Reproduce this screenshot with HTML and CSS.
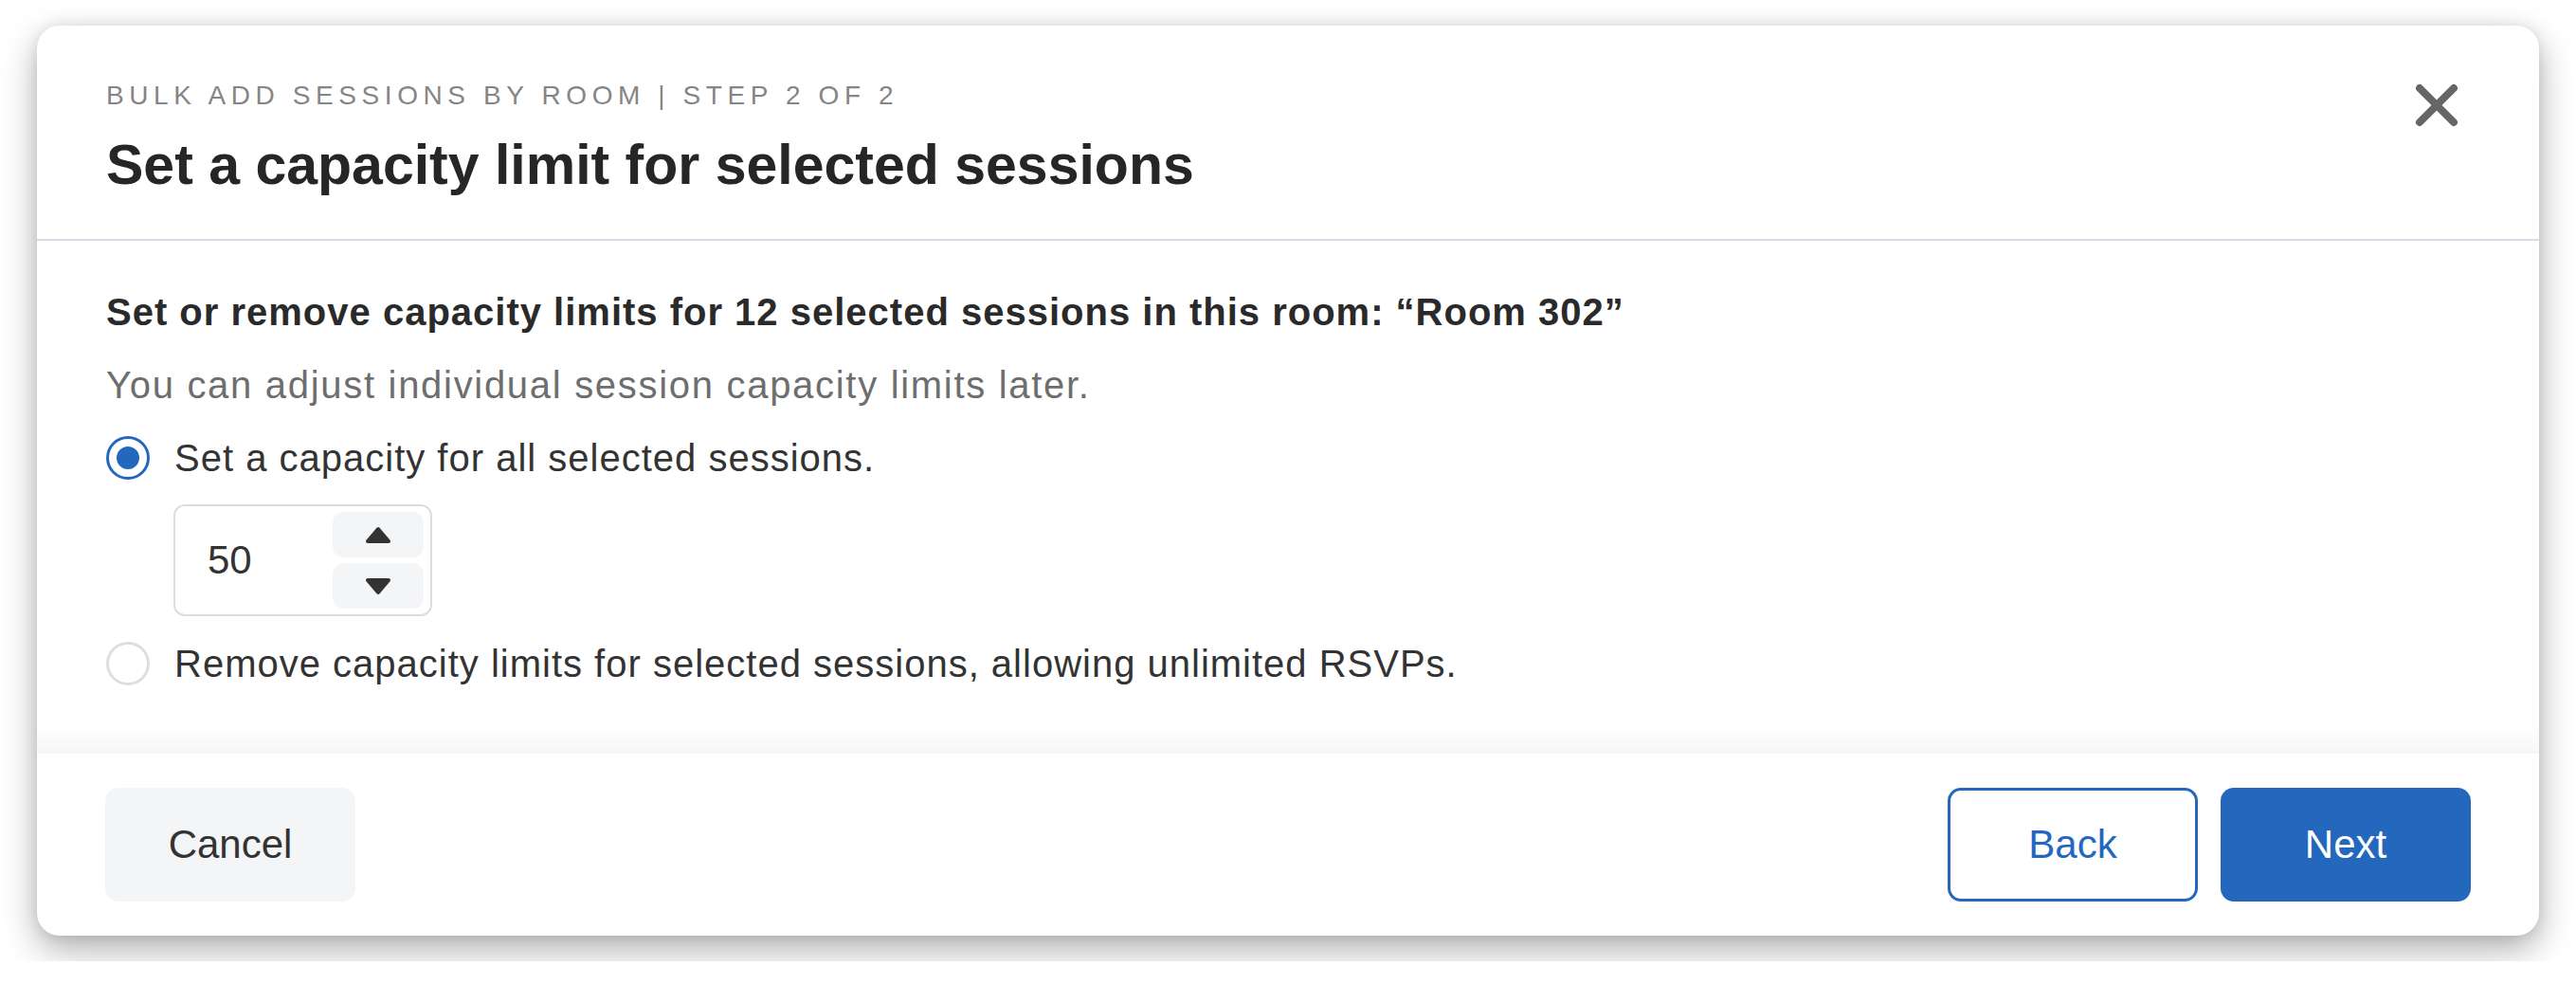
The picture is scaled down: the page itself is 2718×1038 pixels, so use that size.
FILE: index.html
```html
<!DOCTYPE html>
<html lang="en">
  <head>
    <meta charset="UTF-8" />
    <meta name="viewport" content="width=device-width, initial-scale=1.0" />
    <title>Bulk add sessions</title>
    <link rel="stylesheet" href="styles.css">
  </head>
  <body>
    <div class="modal">
      <div class="modal-header">
        <div class="titles">
          <p class="step">Bulk add sessions by room | Step 2 of 2</p>
          <h1 class="title">Set a capacity limit for selected sessions</h1>
        </div>
        <button class="close" aria-label="Close">
          <svg width="46" height="46" viewBox="0 0 46 46">
            <path d="M5 5 L41 41 M41 5 L5 41" stroke="#666" stroke-width="8" stroke-linecap="round" fill="none" />
          </svg>
        </button>
      </div>

      <div class="modal-body">
        <h2 class="lead">Set or remove capacity limits for 12 selected sessions in this room: &ldquo;Room 302&rdquo;</h2>
        <p class="hint">You can adjust individual session capacity limits later.</p>

        <label class="option">
          <span class="radio checked"></span>
          Set a capacity for all selected sessions.
        </label>

        <div class="stepper">
          <span class="value">50</span>
          <div class="spin">
            <button class="spin-btn" aria-label="Increase">
              <svg width="30" height="19" viewBox="0 0 30 19">
                <path d="M4 16 L15 3 L26 16 Z" fill="#333" stroke="#333" stroke-width="4" stroke-linejoin="round" />
              </svg>
            </button>
            <button class="spin-btn" aria-label="Decrease">
              <svg width="30" height="19" viewBox="0 0 30 19">
                <path d="M4 3 L15 16 L26 3 Z" fill="#333" stroke="#333" stroke-width="4" stroke-linejoin="round" />
              </svg>
            </button>
          </div>
        </div>

        <label class="option">
          <span class="radio"></span>
          Remove capacity limits for selected sessions, allowing unlimited RSVPs.
        </label>
      </div>

      <div class="modal-footer">
        <button class="btn btn-cancel">Cancel</button>
        <div class="actions">
          <button class="btn btn-back">Back</button>
          <button class="btn btn-next">Next</button>
        </div>
      </div>
    </div>
  </body>
</html>
```

FILE: styles.css
```css
* {
  margin: 0;
  padding: 0;
  box-sizing: border-box;
}
body {
  background: #fff;
  padding: 27px 39px;
  font-family: "Liberation Sans", Arial, sans-serif;
  color: #333;
}
button {
  font-family: inherit;
  border: none;
  background: none;
  cursor: pointer;
}
.modal {
  width: 2640px;
  height: 960px;
  background: #fff;
  border-radius: 24px;
  box-shadow: 0 14px 36px rgba(0, 0, 0, 0.32), 0 0 14px rgba(0, 0, 0, 0.08);
  display: flex;
  flex-direction: column;
  overflow: hidden;
}

/* header */
.modal-header {
  display: flex;
  justify-content: space-between;
  align-items: flex-start;
  padding: 57px 85px 43px 73px;
  border-bottom: 2px solid #d5dde7;
}
.step {
  font-size: 28px;
  line-height: 34px;
  letter-spacing: 5.6px;
  text-transform: uppercase;
  color: #858585;
}
.title {
  margin-top: 21px;
  font-size: 59px;
  line-height: 70px;
  font-weight: bold;
  color: #262626;
}
.close {
  margin-top: 4px;
  width: 46px;
  height: 46px;
  display: flex;
}

/* body */
.modal-body {
  flex: 1;
  padding: 51px 73px 0;
  background: linear-gradient(to bottom, #fff calc(100% - 32px), #f6f6f6);
}
.lead {
  font-size: 40px;
  line-height: 48px;
  font-weight: bold;
  letter-spacing: 1px;
  color: #2a2a2a;
}
.hint {
  margin-top: 29px;
  font-size: 40px;
  line-height: 48px;
  letter-spacing: 1.7px;
  color: #6e6e6e;
}
.option {
  margin-top: 29px;
  display: flex;
  align-items: center;
  gap: 26px;
  font-size: 40px;
  line-height: 48px;
  letter-spacing: 1px;
  color: #333;
}
.stepper + .option {
  margin-top: 26px;
}
.radio {
  width: 46px;
  height: 46px;
  border-radius: 50%;
  border: 3px solid #dedede;
  display: flex;
  align-items: center;
  justify-content: center;
  flex-shrink: 0;
}
.radio.checked {
  border-color: #2468be;
}
.radio.checked::after {
  content: "";
  width: 24px;
  height: 24px;
  border-radius: 50%;
  background: #2468be;
}

/* number input */
.stepper {
  margin: 25px 0 0 71px;
  width: 273px;
  height: 118px;
  border: 2px solid #dddddd;
  border-radius: 12px;
  display: flex;
  align-items: center;
}
.stepper .value {
  padding-left: 34px;
  font-size: 42px;
  color: #333;
}
.spin {
  margin-left: auto;
  padding: 6px 7px;
  display: flex;
  flex-direction: column;
  gap: 6px;
}
.spin-btn {
  width: 96px;
  height: 48px;
  border-radius: 12px;
  background: #f4f5f7;
  display: flex;
  align-items: center;
  justify-content: center;
}

/* footer */
.modal-footer {
  display: flex;
  justify-content: space-between;
  padding: 36px 72px;
}
.actions {
  display: flex;
  gap: 24px;
}
.btn {
  width: 264px;
  height: 120px;
  border-radius: 14px;
  font-size: 42px;
  display: flex;
  align-items: center;
  justify-content: center;
}
.btn-cancel {
  background: #f4f5f7;
  color: #333;
}
.btn-back {
  border: 3px solid #2468be;
  color: #2468be;
  background: #fff;
}
.btn-next {
  background: #2468be;
  color: #fff;
}
```
